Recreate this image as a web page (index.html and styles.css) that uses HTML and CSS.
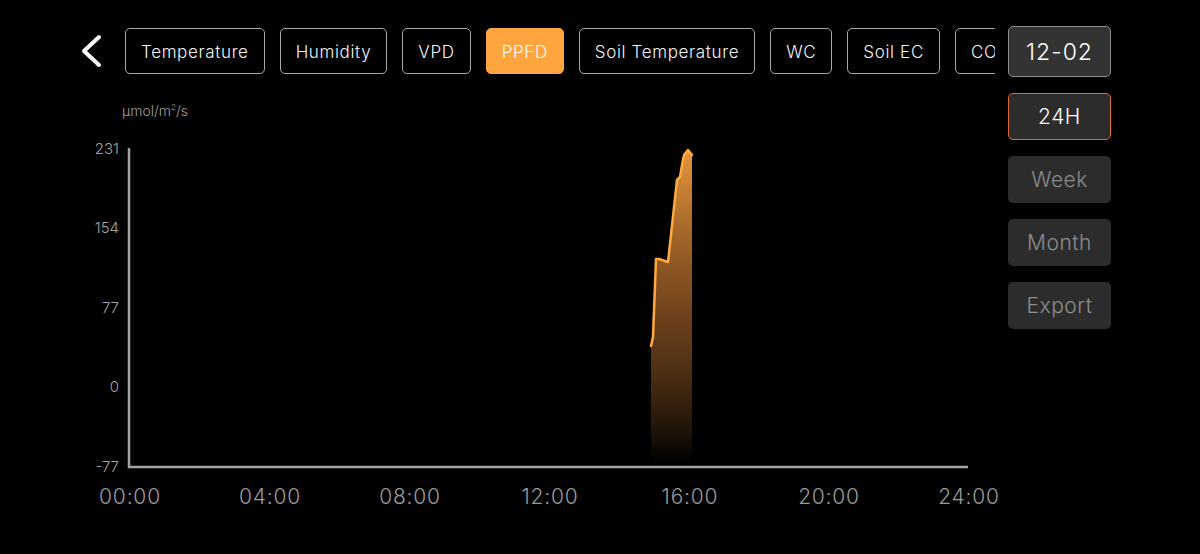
FILE: index.html
```html
<!DOCTYPE html>
<html lang="en">
<head>
  <meta charset="UTF-8">
  <meta name="viewport" content="width=device-width, initial-scale=1.0">
  <title>PPFD</title>
  <link rel="stylesheet" href="styles.css">
</head>
<body>

  <div class="screen">
    <div class="main">
      <div class="top">
        <button class="back" aria-label="Back">
          <svg width="24" height="34" viewBox="0 0 24 34">
            <polyline points="19,3 4,17 19,31" fill="none" stroke="#fff" stroke-width="4" stroke-linecap="round" stroke-linejoin="round"/>
          </svg>
        </button>
        <div class="tabs">
          <span class="tab">Temperature</span>
          <span class="tab">Humidity</span>
          <span class="tab">VPD</span>
          <span class="tab active">PPFD</span>
          <span class="tab">Soil Temperature</span>
          <span class="tab">WC</span>
          <span class="tab">Soil EC</span>
          <span class="tab">CO2</span>
        </div>
      </div>

      <svg class="chart" width="995" height="464" viewBox="0 90 995 464">
        <defs>
          <linearGradient id="fill" x1="0" y1="150" x2="0" y2="462" gradientUnits="userSpaceOnUse">
            <stop offset="0" stop-color="#ffa742" stop-opacity="0.9"/>
            <stop offset="0.55" stop-color="#c27330" stop-opacity="0.55"/>
            <stop offset="1" stop-color="#ffa742" stop-opacity="0"/>
          </linearGradient>
        </defs>

        <text class="unit" x="122" y="116">µmol/m<tspan class="sup" dy="-6">2</tspan><tspan dy="6">/s</tspan></text>

        <g class="ylabels">
          <text x="119" y="154">231</text>
          <text x="119" y="233">154</text>
          <text x="119" y="313">77</text>
          <text x="119" y="392">0</text>
          <text x="119" y="472">-77</text>
        </g>

        <path d="M651,346 L653,337 L656,259 L659,259 L668,262 L677,180 L680,177 L682,165 L684,155 L688,150 L692,155 L692,467 L651,467 Z" fill="url(#fill)"/>
        <path d="M651,346 L653,337 L656,259 L659,259 L668,262 L677,180 L680,177 L682,165 L684,155 L688,150 L692,155" fill="none" stroke="#ffa940" stroke-width="2.5" stroke-linejoin="round" stroke-linecap="round"/>

        <polyline points="129,148 129,467 968,467" fill="none" stroke="#a3a3a3" stroke-width="2.5"/>

        <g class="xlabels">
          <text x="130" y="504">00:00</text>
          <text x="270" y="504">04:00</text>
          <text x="410" y="504">08:00</text>
          <text x="550" y="504">12:00</text>
          <text x="690" y="504">16:00</text>
          <text x="829" y="504">20:00</text>
          <text x="969" y="504">24:00</text>
        </g>
      </svg>
    </div>

    <div class="side">
      <div class="date">12-02</div>
      <div class="range active">24H</div>
      <div class="range">Week</div>
      <div class="range">Month</div>
      <div class="range">Export</div>
    </div>
  </div>

</body>
</html>
```

FILE: styles.css
```css
:root {
  --cor-destaque: #ffa53f;
  --cor-borda: #a8a8a8;
  --cor-cinza: #2c2c2c;
  --cor-texto-apagado: #8c8c8c;
}

body {
  margin: 0;
  background: #000;
  color: #fff;
  font-family: Inter, 'Liberation Sans', sans-serif;
  width: 1200px;
  height: 554px;
  overflow: hidden;
}

.screen {
  display: flex;
}

.main {
  width: 995px;
  display: flex;
  flex-direction: column;
}

.top {
  display: flex;
  align-items: center;
  padding: 28px 0 16px 80px;
  height: 46px;
}

.back {
  background: none;
  border: none;
  padding: 0;
  width: 24px;
  height: 34px;
  margin-right: 21px;
  cursor: pointer;
}

.tabs {
  display: flex;
  gap: 15px;
  overflow: hidden;
  flex: 1;
  height: 46px;
}

.tab {
  flex-shrink: 0;
  box-sizing: border-box;
  height: 46px;
  padding: 2px 15px 0;
  display: flex;
  align-items: center;
  border: 1.5px solid var(--cor-borda);
  border-radius: 5px;
  font-size: 17px;
  font-weight: 300;
  letter-spacing: 0.65px;
  color: #f4f4f4;
  white-space: nowrap;
}

.tab.active {
  background: var(--cor-destaque);
  border-color: var(--cor-destaque);
  color: #fff;
}

.chart {
  display: block;
  overflow: visible;
}

.chart text {
  font-family: Inter, 'Liberation Sans', sans-serif;
  font-weight: 300;
}

.unit {
  fill: #a0a0a0;
  font-size: 14px;
}

.unit .sup {
  font-size: 8px;
}

.ylabels text {
  fill: #a5a5a5;
  font-size: 15px;
  text-anchor: end;
}

.xlabels text {
  fill: #9a9a9a;
  font-size: 21px;
  letter-spacing: 0.8px;
  text-anchor: middle;
}

.side {
  margin-left: 13px;
  width: 103px;
  padding-top: 26px;
  display: flex;
  flex-direction: column;
  gap: 16px;
}

.date,
.range {
  box-sizing: border-box;
  height: 47px;
  border-radius: 5px;
  background: var(--cor-cinza);
  display: flex;
  align-items: center;
  justify-content: center;
  font-size: 21px;
  font-weight: 300;
  color: var(--cor-texto-apagado);
  letter-spacing: 0.5px;
}

.date {
  height: 51px;
  background: #333;
  border: 1.5px solid #8e8e8e;
  color: #fff;
  font-size: 23px;
  letter-spacing: 1px;
}

.range.active {
  border: 1.5px solid #d9683a;
  color: #fff;
}
```
